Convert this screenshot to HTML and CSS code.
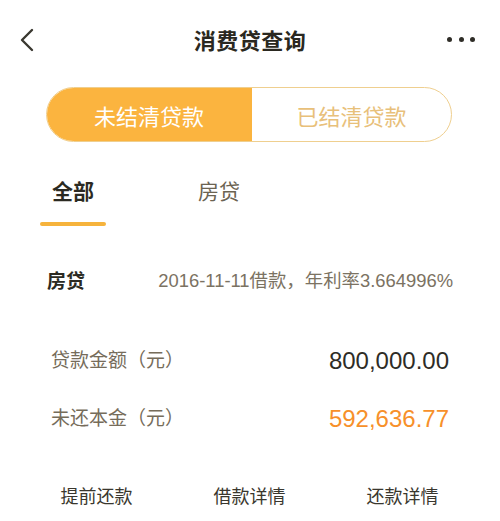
FILE: index.html
```html
<!DOCTYPE html>
<html lang="zh-CN">
<head>
<meta charset="utf-8">
<title>消费贷查询</title>
<link rel="stylesheet" href="styles.css">
</head>
<body>
<div class="page">
  <header class="topbar">
    <div class="back">
      <svg width="16" height="24" viewBox="0 0 16 24"><path d="M13 2 L3 12 L13 22" fill="none" stroke="#3a3830" stroke-width="2.4" stroke-linecap="round" stroke-linejoin="round"/></svg>
    </div>
    <h1 class="title">消费贷查询</h1>
    <div class="more"><span></span><span></span><span></span></div>
  </header>

  <div class="segment">
    <div class="seg seg-active">未结清贷款</div>
    <div class="seg">已结清贷款</div>
  </div>

  <nav class="tabs">
    <div class="tab tab-active">全部<i class="bar"></i></div>
    <div class="tab">房贷</div>
  </nav>

  <section class="loan">
    <div class="loan-head">
      <span class="loan-type">房贷</span>
      <span class="loan-info">2016-11-11借款，年利率3.664996%</span>
    </div>
    <div class="loan-row">
      <span class="label">贷款金额（元）</span>
      <span class="value">800,000.00</span>
    </div>
    <div class="loan-row">
      <span class="label">未还本金（元）</span>
      <span class="value value-orange">592,636.77</span>
    </div>
  </section>

  <div class="actions">
    <div class="action">提前还款</div>
    <div class="action">借款详情</div>
    <div class="action">还款详情</div>
  </div>
</div>
</body>
</html>
```

FILE: styles.css
```css
html, body {
  margin: 0;
  padding: 0;
  background: #ffffff;
}
body {
  font-family: "Liberation Sans", "Noto Sans CJK SC", sans-serif;
  color: #2b2a22;
}
.page {
  width: 500px;
}
.topbar {
  height: 78px;
  display: grid;
  grid-template-columns: 1fr auto 1fr;
  align-items: center;
}
.back {
  padding-left: 19px;
  display: flex;
  align-items: center;
  padding-top: 1px;
}
.title {
  margin: 0;
  font-size: 22px;
  font-weight: 700;
  letter-spacing: 0.5px;
  color: #2a2820;
}
.more {
  justify-self: end;
  padding-right: 25px;
  display: flex;
  gap: 6.5px;
}
.more span {
  width: 5px;
  height: 5px;
  border-radius: 50%;
  background: #2f2d27;
}
.segment {
  margin: 9px 48px 0 46px;
  height: 55px;
  box-sizing: border-box;
  border: 1px solid #efcf8f;
  border-radius: 28px;
  display: grid;
  grid-template-columns: 205px 1fr;
  overflow: hidden;
}
.seg {
  display: flex;
  align-items: center;
  justify-content: center;
  font-size: 22px;
  color: #e8c07a;
}
.seg-active {
  background: #fbb43f;
  color: #ffffff;
  margin: -1px 0 -1px -1px;
}
.tabs {
  margin-top: 30px;
  padding-left: 40px;
  display: flex;
  gap: 80px;
}
.tab {
  width: 66px;
  text-align: center;
  font-size: 21px;
  line-height: 40px;
  color: #6b6352;
  display: flex;
  flex-direction: column;
  align-items: center;
}
.tab-active {
  font-weight: 700;
  color: #2b2a22;
}
.bar {
  display: block;
  margin-top: 10px;
  width: 66px;
  height: 4px;
  border-radius: 2px;
  background: #f6b33c;
}
.loan {
  padding: 0 51px 0 47px;
}
.loan-head {
  margin-top: 38px;
  display: flex;
  justify-content: space-between;
  align-items: center;
  height: 30px;
  margin-right: -4px;
}
.loan-type {
  font-size: 19px;
  font-weight: 700;
  color: #2b2a22;
}
.loan-info {
  font-size: 18.4px;
  color: #7b7262;
}
.loan-row {
  display: flex;
  justify-content: space-between;
  align-items: center;
  height: 58px;
  padding-left: 4px;
}
.loan-head + .loan-row {
  margin-top: 35px;
}
.label {
  font-size: 19px;
  color: #766c5a;
}
.value {
  font-size: 24px;
  color: #2e2c26;
  padding-top: 5px;
}
.value-orange {
  color: #f7902a;
}
.actions {
  margin-top: 37px;
  padding: 0 21px 0 20px;
  display: grid;
  grid-template-columns: repeat(3, 1fr);
}
.action {
  text-align: center;
  font-size: 18px;
  line-height: 30px;
  color: #3a372e;
}
```
